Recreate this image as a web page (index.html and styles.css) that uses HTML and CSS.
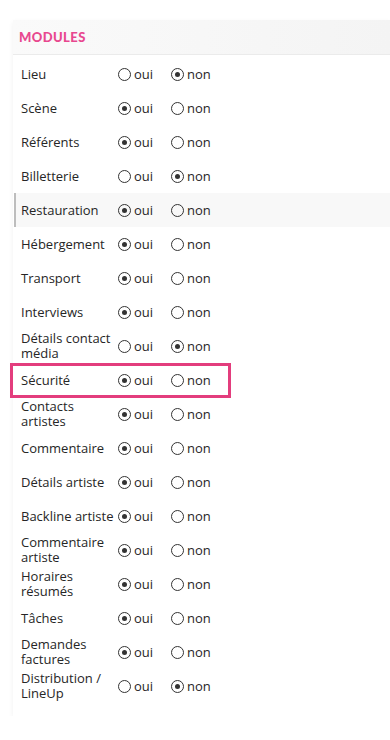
FILE: index.html
```html
<!DOCTYPE html>
<html lang="fr">
<head>
<meta charset="UTF-8">
<meta name="viewport" content="width=device-width, initial-scale=1.0">
<title>Modules</title>
<link rel="stylesheet" href="styles.css">
</head>
<body>
    <div class="card">
        <div class="card-header">
            <h2>MODULES</h2>
        </div>
        <form class="modules" id="modulesForm">
            <div class="row">
                <span class="label">Lieu</span>
                <label class="opt"><input type="radio" name="m1" value="oui">oui</label>
                <label class="opt"><input type="radio" name="m1" value="non" checked>non</label>
            </div>
            <div class="row">
                <span class="label">Scène</span>
                <label class="opt"><input type="radio" name="m2" value="oui" checked>oui</label>
                <label class="opt"><input type="radio" name="m2" value="non">non</label>
            </div>
            <div class="row">
                <span class="label">Référents</span>
                <label class="opt"><input type="radio" name="m3" value="oui" checked>oui</label>
                <label class="opt"><input type="radio" name="m3" value="non">non</label>
            </div>
            <div class="row">
                <span class="label">Billetterie</span>
                <label class="opt"><input type="radio" name="m4" value="oui">oui</label>
                <label class="opt"><input type="radio" name="m4" value="non" checked>non</label>
            </div>
            <div class="row hover">
                <span class="label">Restauration</span>
                <label class="opt"><input type="radio" name="m5" value="oui" checked>oui</label>
                <label class="opt"><input type="radio" name="m5" value="non">non</label>
            </div>
            <div class="row">
                <span class="label">Hébergement</span>
                <label class="opt"><input type="radio" name="m6" value="oui" checked>oui</label>
                <label class="opt"><input type="radio" name="m6" value="non">non</label>
            </div>
            <div class="row">
                <span class="label">Transport</span>
                <label class="opt"><input type="radio" name="m7" value="oui" checked>oui</label>
                <label class="opt"><input type="radio" name="m7" value="non">non</label>
            </div>
            <div class="row">
                <span class="label">Interviews</span>
                <label class="opt"><input type="radio" name="m8" value="oui" checked>oui</label>
                <label class="opt"><input type="radio" name="m8" value="non">non</label>
            </div>
            <div class="row">
                <span class="label">Détails contact média</span>
                <label class="opt"><input type="radio" name="m9" value="oui">oui</label>
                <label class="opt"><input type="radio" name="m9" value="non" checked>non</label>
            </div>
            <div class="row highlight">
                <span class="label">Sécurité</span>
                <label class="opt"><input type="radio" name="m10" value="oui" checked>oui</label>
                <label class="opt"><input type="radio" name="m10" value="non">non</label>
            </div>
            <div class="row">
                <span class="label">Contacts artistes</span>
                <label class="opt"><input type="radio" name="m11" value="oui" checked>oui</label>
                <label class="opt"><input type="radio" name="m11" value="non">non</label>
            </div>
            <div class="row">
                <span class="label">Commentaire</span>
                <label class="opt"><input type="radio" name="m12" value="oui" checked>oui</label>
                <label class="opt"><input type="radio" name="m12" value="non">non</label>
            </div>
            <div class="row">
                <span class="label">Détails artiste</span>
                <label class="opt"><input type="radio" name="m13" value="oui" checked>oui</label>
                <label class="opt"><input type="radio" name="m13" value="non">non</label>
            </div>
            <div class="row">
                <span class="label">Backline artiste</span>
                <label class="opt"><input type="radio" name="m14" value="oui" checked>oui</label>
                <label class="opt"><input type="radio" name="m14" value="non">non</label>
            </div>
            <div class="row">
                <span class="label">Commentaire artiste</span>
                <label class="opt"><input type="radio" name="m15" value="oui" checked>oui</label>
                <label class="opt"><input type="radio" name="m15" value="non">non</label>
            </div>
            <div class="row">
                <span class="label">Horaires résumés</span>
                <label class="opt"><input type="radio" name="m16" value="oui" checked>oui</label>
                <label class="opt"><input type="radio" name="m16" value="non">non</label>
            </div>
            <div class="row">
                <span class="label">Tâches</span>
                <label class="opt"><input type="radio" name="m17" value="oui" checked>oui</label>
                <label class="opt"><input type="radio" name="m17" value="non">non</label>
            </div>
            <div class="row">
                <span class="label">Demandes factures</span>
                <label class="opt"><input type="radio" name="m18" value="oui" checked>oui</label>
                <label class="opt"><input type="radio" name="m18" value="non">non</label>
            </div>
            <div class="row">
                <span class="label">Distribution / LineUp</span>
                <label class="opt"><input type="radio" name="m19" value="oui">oui</label>
                <label class="opt"><input type="radio" name="m19" value="non" checked>non</label>
            </div>
        </form>
    </div>
</body>
</html>
```

FILE: styles.css
```css
body {
    margin: 0;
    background-color: #fff;
    font-family: "Open Sans", "Noto Sans", sans-serif;
    color: #262626;
}
.card {
    margin: 20px 0 0 13px;
    background-color: #fff;
    padding-bottom: 13px;
    box-shadow: 0 2px 5px rgba(0, 0, 0, 0.06);
}
.card-header {
    height: 34px;
    background: linear-gradient(to right, #fafafa, #f4f4f4);
    border-bottom: 1px solid #ebebeb;
    display: flex;
    align-items: center;
    padding-left: 6px;
}
.card-header h2 {
    margin: 0;
    font-family: Lato, sans-serif;
    font-weight: 900;
    font-size: 13px;
    letter-spacing: 0.4px;
    color: #e8488f;
}
.modules {
    margin: 2px 0 0;
}
.row {
    position: relative;
    height: 34px;
    display: flex;
    align-items: center;
    padding-left: 8px;
    font-size: 13px;
}
.row.hover {
    background-color: #f8f8f8;
    border-left: 2px solid #bdbdbd;
    margin-left: 1px;
    padding-left: 5px;
}
.row.highlight::after {
    content: "";
    position: absolute;
    left: -3px;
    top: 0;
    width: 221px;
    height: 35px;
    border: 3px solid #e33d7d;
    box-sizing: border-box;
}
.label {
    width: 97px;
    line-height: 15px;
}
.opt {
    display: flex;
    align-items: center;
    width: 53px;
    line-height: 1;
}
.opt input {
    appearance: none;
    -webkit-appearance: none;
    width: 13px;
    height: 13px;
    margin: 0 3px 0 0;
    border: 1.5px solid #333;
    border-radius: 50%;
    box-sizing: border-box;
    display: grid;
    place-content: center;
}
.opt input:checked::before {
    content: "";
    width: 5px;
    height: 5px;
    border-radius: 50%;
    background-color: #333;
}
```
